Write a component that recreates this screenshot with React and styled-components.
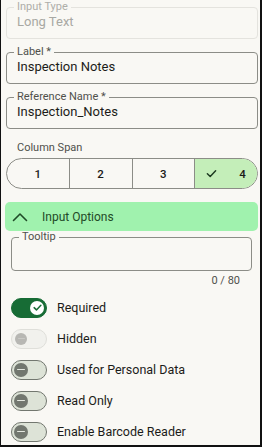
import styled, { createGlobalStyle } from 'styled-components'

const GlobalStyle = createGlobalStyle`
  html, body {
    margin: 0;
    padding: 0;
    background: #f9f8f4;
  }
  body {
    font-family: Roboto, "Liberation Sans", sans-serif;
    color: #1c1c19;
  }
`

function CheckMark({ size = 10, color = '#1d3a20', width = 1.6 }) {
  return (
    <svg width={size} height={size} viewBox="0 0 12 12" fill="none">
      <path d="M1.5 6.2 L4.6 9.2 L10.5 3" stroke={color} strokeWidth={width} strokeLinecap="round" strokeLinejoin="round" />
    </svg>
  )
}

function ChevronUp() {
  return (
    <svg width="16" height="10" viewBox="0 0 16 10" fill="none">
      <path d="M1.5 8.5 L8 2 L14.5 8.5" stroke="#1f4a27" strokeWidth="1.6" strokeLinecap="round" strokeLinejoin="round" />
    </svg>
  )
}

function Toggle({ state }) {
  return (
    <Track state={state}>
      <Thumb state={state}>
        {state === 'on' ? <CheckMark size={9} color="#176c35" width={2} /> : <Minus state={state} />}
      </Thumb>
    </Track>
  )
}

const toggles = [
  { label: 'Required', state: 'on' },
  { label: 'Hidden', state: 'disabled' },
  { label: 'Used for Personal Data', state: 'off' },
  { label: 'Read Only', state: 'off' },
  { label: 'Enable Barcode Reader', state: 'off' },
]

export default function App() {
  return (
    <>
      <GlobalStyle />
      <Panel>
        <Field disabled>
          <Legend disabled>Input Type</Legend>
          <Value disabled>Long Text</Value>
        </Field>
        <Field>
          <Legend>Label *</Legend>
          <Value>Inspection Notes</Value>
        </Field>
        <Field>
          <Legend>Reference Name *</Legend>
          <Value>Inspection_Notes</Value>
        </Field>

        <SpanLabel>Column Span</SpanLabel>
        <Segments>
          {[1, 2, 3, 4].map((n) => (
            <Segment key={n} selected={n === 4}>
              {n === 4 && <CheckMark size={11} />}
              <span>{n}</span>
            </Segment>
          ))}
        </Segments>

        <SectionBar>
          <ChevronUp />
          <span>Input Options</span>
        </SectionBar>

        <TooltipField>
          <Legend>Tooltip</Legend>
        </TooltipField>
        <Counter>0 / 80</Counter>

        <ToggleList>
          {toggles.map((t) => (
            <ToggleRow key={t.label}>
              <Toggle state={t.state} />
              <ToggleLabel>{t.label}</ToggleLabel>
            </ToggleRow>
          ))}
        </ToggleList>
      </Panel>
    </>
  )
}

const Panel = styled.div`
  box-sizing: border-box;
  width: 262px;
  height: 447px;
  overflow: hidden;
  border-left: 1px solid #111;
  border-right: 2px solid #111;
  border-bottom: 2px solid #111;
  padding: 1px 2px 0 5px;
  display: flex;
  flex-direction: column;

  & > * {
    flex-shrink: 0;
  }
`

const Field = styled.fieldset`
  margin: 0 0 7px 0;
  padding: 0 10px 7px 10px;
  border: 1px solid ${(p) => (p.disabled ? '#e4e3de' : '#8c8d87')};
  border-radius: 4px;
  min-width: 0;
`

const Legend = styled.legend`
  font-size: 11px;
  line-height: 12px;
  padding: 0 3px;
  margin-left: -3px;
  color: ${(p) => (p.disabled ? '#aeaea9' : '#4f504b')};
`

const Value = styled.div`
  font-size: 13px;
  line-height: 18px;
  color: ${(p) => (p.disabled ? '#a8a8a3' : '#1c1c19')};
`

const SpanLabel = styled.div`
  margin: 5px 0 0 11px;
  font-size: 11px;
  line-height: 14px;
  color: #4f504b;
`

const Segments = styled.div`
  margin-top: 3px;
  display: flex;
  height: 31px;
  box-sizing: border-box;
  border: 1px solid #8c8d87;
  border-radius: 16px;
  overflow: hidden;
`

const Segment = styled.div`
  flex: 1;
  display: flex;
  align-items: center;
  justify-content: center;
  gap: 22px;
  font-size: 11.5px;
  font-weight: 500;
  color: #1c1c19;
  background: ${(p) => (p.selected ? '#c4eeb9' : 'transparent')};
  & + & {
    border-left: 1px solid #8c8d87;
  }
`

const SectionBar = styled.div`
  margin: 13px 0 0 -1px;
  height: 29px;
  border-radius: 5px;
  background: #a0f2ae;
  display: flex;
  align-items: center;
  gap: 14px;
  padding-left: 7px;
  font-size: 12px;
  color: #1f4a27;
`

const TooltipField = styled.fieldset`
  margin: 0 6px 0 5px;
  padding: 0 10px 0 10px;
  height: 40px;
  box-sizing: border-box;
  border: 1px solid #8c8d87;
  border-radius: 4px;
  min-width: 0;
`

const Counter = styled.div`
  align-self: flex-end;
  margin: 3px 18px 0 0;
  font-size: 11px;
  line-height: 14px;
  color: #4f504b;
`

const ToggleList = styled.div`
  margin-top: 4px;
  display: flex;
  flex-direction: column;
`

const ToggleRow = styled.div`
  height: 31px;
  display: flex;
  align-items: center;
  gap: 10px;
  padding-left: 5px;
`

const Track = styled.div`
  box-sizing: border-box;
  width: 36px;
  height: 20px;
  border-radius: 10px;
  display: flex;
  align-items: center;
  padding: 0 2px;
  justify-content: ${(p) => (p.state === 'on' ? 'flex-end' : 'flex-start')};
  background: ${(p) => (p.state === 'on' ? '#176c35' : p.state === 'disabled' ? '#f1f1ed' : '#dde3d7')};
  border: 1.5px solid ${(p) => (p.state === 'on' ? '#176c35' : p.state === 'disabled' ? '#dfdfda' : '#72776f')};
`

const Thumb = styled.div`
  width: ${(p) => (p.state === 'disabled' ? '12px' : '14px')};
  height: ${(p) => (p.state === 'disabled' ? '12px' : '14px')};
  margin-left: ${(p) => (p.state === 'disabled' ? '1px' : '0')};
  border-radius: 50%;
  display: flex;
  align-items: center;
  justify-content: center;
  background: ${(p) => (p.state === 'on' ? '#ffffff' : p.state === 'disabled' ? '#b7b7b3' : '#72776f')};
`

const Minus = styled.div`
  width: ${(p) => (p.state === 'disabled' ? '7px' : '8px')};
  height: 1.5px;
  border-radius: 1px;
  background: ${(p) => (p.state === 'disabled' ? '#c9c9c5' : '#e3e7df')};
`

const ToggleLabel = styled.span`
  font-size: 12.5px;
  color: #1c1c19;
`
